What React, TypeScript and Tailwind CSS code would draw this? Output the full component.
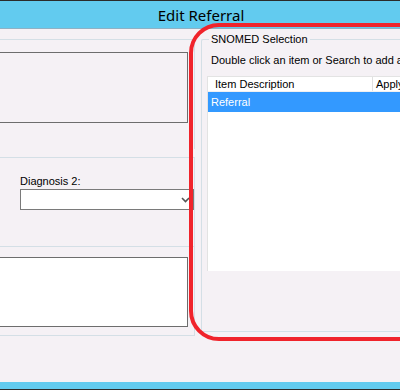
import type { JSX } from "react/jsx-runtime";

export default function App(): JSX.Element {
  return (
    <div className="relative w-[400px] h-[390px] overflow-hidden bg-[#f5f1f5] flex flex-col font-['Liberation_Sans',Arial,sans-serif] text-[11px] text-black">
      {/* Title bar */}
      <div className="h-px bg-[#2b2b2b]" />
      <div className="h-[28px] bg-[#62cbef] border-b border-[#8fb1c4] flex items-center justify-center">
        <span className="font-['Noto_Sans',sans-serif] text-[15px] leading-none pl-[2px] pt-[1px]">
          Edit Referral
        </span>
      </div>

      {/* Body */}
      <div className="flex-1 flex">
        {/* Left column */}
        <div className="w-[195px] shrink-0 pt-[10px] flex flex-col">
          <div className="h-[110px] border-t border-r border-[#d4dfe6] pt-[12px]">
            <div className="w-[188px] h-[71px] border border-l-0 border-[#6d6d6d]" />
          </div>
          <div className="mt-[8px] h-[89px] border-t border-r border-[#d4dfe6] pl-[20px] pt-[17px]">
            <div className="leading-[13px]">Diagnosis 2:</div>
            <div className="mt-[1px] h-[21px] bg-white border border-[#7a7a7a] flex items-center justify-end pr-[3px]">
              <svg width="9" height="6" viewBox="0 0 9 6">
                <path d="M1 1 L4.5 4.5 L8 1" fill="none" stroke="#555" strokeWidth="1.6" />
              </svg>
            </div>
          </div>
          <div className="h-[90px] border-t border-r border-b border-[#d4dfe6] pt-[10px]">
            <div className="w-[188px] h-[70px] bg-white border border-l-0 border-[#6d6d6d]" />
          </div>
        </div>

        {/* Right column */}
        <div className="ml-[6px] flex-1 min-w-0 pt-[10px]">
          <div className="relative h-[293px] border border-r-0 border-[#d4dfe6] rounded-tl-[2px] pl-[5px] pt-[14px]">
            <span className="absolute -top-[7px] left-[7px] bg-[#f5f1f5] px-[2px] leading-[13px]">
              SNOMED Selection
            </span>
            <div className="pl-[4px] leading-[13px] whitespace-nowrap">
              Double click an item or Search to add a
            </div>
            <div className="mt-[9px] h-[195px] bg-white border-t border-l border-[#e3e3e3] flex flex-col">
              <div className="h-[15px] flex border-b border-[#f0f0f0] leading-[15px]">
                <div className="w-[165px] shrink-0 pl-[7px] border-r border-[#e0e0e0]">Item Description</div>
                <div className="pl-[3px] whitespace-nowrap">Apply</div>
              </div>
              <div className="h-[20px] bg-[#3399ff] text-white pl-[3px] leading-[20px]">Referral</div>
            </div>
          </div>
        </div>
      </div>

      {/* Bottom strip */}
      <div className="mt-[2px] h-[7px] bg-[#62cbef]" />
      <div className="h-px bg-[#2b2b2b]" />

      {/* Red annotation */}
      <div className="absolute left-[189px] top-[23px] w-[260px] h-[318px] border-[4px] border-[#f0232b] rounded-[30px] pointer-events-none" />
    </div>
  );
}
